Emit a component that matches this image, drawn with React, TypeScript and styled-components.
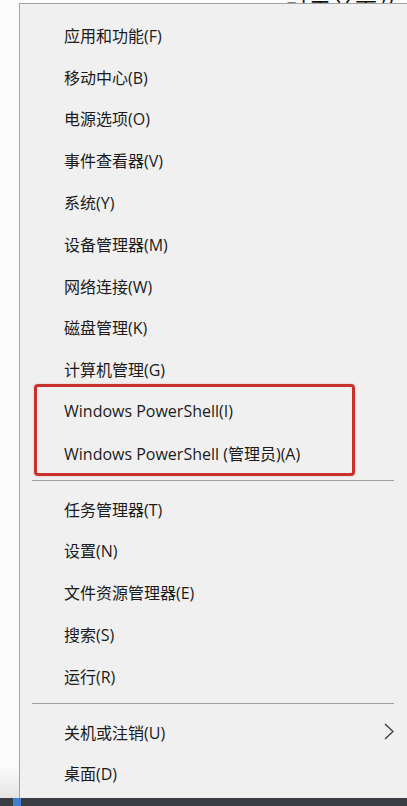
import React from "react";
import styled, { createGlobalStyle } from "styled-components";

const Global = createGlobalStyle`
  html, body { margin: 0; padding: 0; background: #fbfbfb; }
  body { width: 407px; height: 806px; overflow: hidden; }
`;

const Screen = styled.div`
  width: 407px;
  height: 806px;
  display: flex;
  flex-direction: column;
  overflow: hidden;
  background: #fbfbfb;
  font-family: "Open Sans", "Noto Sans CJK SC", sans-serif;
  color: #1b1b1b;
`;

const TopStrip = styled.div`
  height: 3px;
  overflow: hidden;
  display: flex;
  justify-content: flex-end;
  align-items: flex-end;
  padding-right: 6px;
`;

const CutText = styled.span`
  font-family: "Noto Sans CJK SC", sans-serif;
  font-size: 22px;
  line-height: 22px;
  letter-spacing: 1px;
  color: #111;
  transform: translateY(16px);
`;

const Middle = styled.div`
  flex: 1;
  display: flex;
  min-height: 0;
`;

const Gutter = styled.div`
  width: 19px;
  flex: none;
  background: linear-gradient(#fbfbfb 0%, #fbfbfb 96%, #e4e4e4 100%);
`;

const Panel = styled.div`
  width: 395px;
  flex: none;
  background: #f0f0f0;
  border-left: 1px solid #a3a3a3;
  border-top: 1px solid #a3a3a3;
  padding: 10px 0 0 0;
  box-sizing: border-box;
  display: flex;
  flex-direction: column;
`;

const Item = styled.div`
  height: 41.8px;
  flex: none;
  display: flex;
  align-items: center;
  padding-left: 44px;
  padding-right: 20px;
  font-size: 16px;
  white-space: nowrap;
`;

const Label = styled.span`
  flex: 1;
`;

const Separator = styled.div`
  height: 1px;
  background: #a0a0a0;
  margin: 6px 20px 7px 12px;
  flex: none;
`;

const Highlight = styled.div`
  position: relative;
  display: flex;
  flex-direction: column;
  &::after {
    content: "";
    position: absolute;
    left: 14px;
    top: -6px;
    width: 321px;
    bottom: -2px;
    border: 3px solid #c9312c;
    border-radius: 4px;
    box-sizing: border-box;
    box-shadow: 0 0 2px rgba(201, 49, 44, 0.35);
    pointer-events: none;
  }
`;

const Taskbar = styled.div`
  height: 8px;
  flex: none;
  background: #3a3d42;
  display: flex;
  padding-left: 13px;
`;

const TaskIcon = styled.div`
  width: 8px;
  height: 8px;
  background: #3f7fd0;
`;

const Chevron = () => (
  <svg width="10" height="17" viewBox="0 0 10 17" fill="none">
    <polyline points="1,1 9,8.5 1,16" stroke="#333" strokeWidth="1.2" />
  </svg>
);

const group1 = [
  "应用和功能(F)",
  "移动中心(B)",
  "电源选项(O)",
  "事件查看器(V)",
  "系统(Y)",
  "设备管理器(M)",
  "网络连接(W)",
  "磁盘管理(K)",
  "计算机管理(G)",
];
const group2 = [
  "任务管理器(T)",
  "设置(N)",
  "文件资源管理器(E)",
  "搜索(S)",
  "运行(R)",
];

export default function App() {
  return (
    <Screen>
      <Global />
      <TopStrip>
        <CutText>对于前面的</CutText>
      </TopStrip>
      <Middle>
        <Gutter />
        <Panel>
          {group1.map((t) => (
            <Item key={t}>
              <Label>{t}</Label>
            </Item>
          ))}
          <Highlight>
            <Item>
              <Label>Windows PowerShell(I)</Label>
            </Item>
            <Item>
              <Label>Windows PowerShell (管理员)(A)</Label>
            </Item>
          </Highlight>
          <Separator />
          {group2.map((t) => (
            <Item key={t}>
              <Label>{t}</Label>
            </Item>
          ))}
          <Separator />
          <Item>
            <Label>关机或注销(U)</Label>
            <Chevron />
          </Item>
          <Item>
            <Label>桌面(D)</Label>
          </Item>
        </Panel>
      </Middle>
      <Taskbar>
        <TaskIcon />
      </Taskbar>
    </Screen>
  );
}
